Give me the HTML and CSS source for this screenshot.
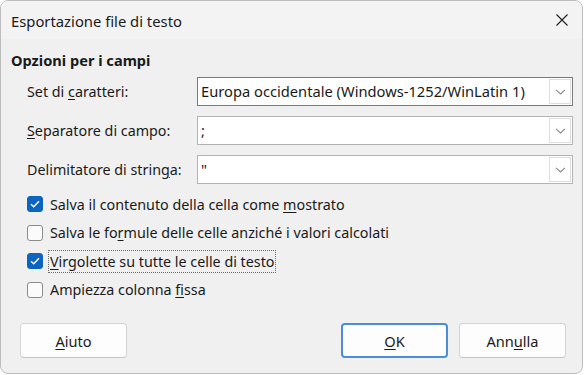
FILE: index.html
```html
<!DOCTYPE html>
<html lang="it">
<head>
    <meta charset="UTF-8">
    <title>Esportazione file di testo</title>
    <link rel="stylesheet" href="styles.css">
</head>
<body>
    <div class="dialog">
        <div class="titlebar">
            <span class="title">Esportazione file di testo</span>
            <svg class="close" width="14" height="14" viewBox="0 0 14 14">
                <path d="M1.5 1.5 L12.5 12.5 M12.5 1.5 L1.5 12.5" stroke="#1f1f1f" stroke-width="1.1" fill="none"/>
            </svg>
        </div>

        <div class="content">
            <div class="section-title">Opzioni per i campi</div>

            <div class="fields">
                <label class="field-label">Set di <u>c</u>aratteri:</label>
                <div class="combo active">
                    <span class="combo-text">Europa occidentale (Windows-1252/WinLatin 1)</span>
                    <span class="combo-btn"><svg width="11" height="6" viewBox="0 0 11 6"><path d="M1 0.8 L5.5 5 L10 0.8" stroke="#8a8a8a" stroke-width="1.1" fill="none"/></svg></span>
                </div>

                <label class="field-label"><u>S</u>eparatore di campo:</label>
                <div class="combo">
                    <span class="combo-text">;</span>
                    <span class="combo-btn"><svg width="11" height="6" viewBox="0 0 11 6"><path d="M1 0.8 L5.5 5 L10 0.8" stroke="#8a8a8a" stroke-width="1.1" fill="none"/></svg></span>
                </div>

                <label class="field-label">Delimitatore di strin<u>g</u>a:</label>
                <div class="combo">
                    <span class="combo-text">"</span>
                    <span class="combo-btn"><svg width="11" height="6" viewBox="0 0 11 6"><path d="M1 0.8 L5.5 5 L10 0.8" stroke="#8a8a8a" stroke-width="1.1" fill="none"/></svg></span>
                </div>
            </div>

            <div class="checks">
                <div class="check-row">
                    <span class="box checked"><svg width="10" height="8" viewBox="0 0 10 8"><path d="M1 4.2 L3.7 6.8 L9 1.2" stroke="#fff" stroke-width="1.4" fill="none"/></svg></span>
                    <span class="check-label">Salva il contenuto della cella come <u>m</u>ostrato</span>
                </div>
                <div class="check-row">
                    <span class="box"></span>
                    <span class="check-label">Salva le fo<u>r</u>mule delle celle anziché i valori calcolati</span>
                </div>
                <div class="check-row">
                    <span class="box checked"><svg width="10" height="8" viewBox="0 0 10 8"><path d="M1 4.2 L3.7 6.8 L9 1.2" stroke="#fff" stroke-width="1.4" fill="none"/></svg></span>
                    <span class="check-label focus"><u>V</u>irgolette su tutte le celle di testo</span>
                </div>
                <div class="check-row">
                    <span class="box"></span>
                    <span class="check-label">Ampiezza colonna <u>f</u>issa</span>
                </div>
            </div>

            <div class="buttons">
                <button class="btn"><u>A</u>iuto</button>
                <div class="spacer"></div>
                <button class="btn default"><u>O</u>K</button>
                <button class="btn">Ann<u>u</u>lla</button>
            </div>
        </div>
    </div>
</body>
</html>
```

FILE: styles.css
```css
body {
    margin: 0;
    background-color: #ffffff;
    font-family: "Noto Sans", "Open Sans", sans-serif;
    font-size: 14.3px;
    color: #1a1a1a;
}
.dialog {
    width: 583px;
    height: 374px;
    border: 1px solid #bdbdbd;
    border-radius: 8px;
    box-sizing: border-box;
    overflow: hidden;
    background-color: #f0f0f0;
    display: flex;
    flex-direction: column;
}
.titlebar {
    height: 38px;
    flex: none;
    background-color: #f3f3f4;
    display: flex;
    align-items: center;
    padding: 0 13px 0 10px;
}
.title {
    flex: 1;
    font-size: 14.8px;
    margin-top: 1px;
}
.content {
    flex: 1;
    display: flex;
    flex-direction: column;
    padding: 11px 9px 0 10px;
}
.section-title {
    font-weight: bold;
    font-size: 14.6px;
    line-height: 20px;
}
u {
    text-decoration-thickness: 1px;
    text-underline-offset: 2px;
}

/* combo rows */
.fields {
    display: grid;
    grid-template-columns: 170px 376px;
    row-gap: 10px;
    align-items: center;
    margin-top: 7px;
    padding-left: 16px;
}
.combo {
    height: 29px;
    box-sizing: border-box;
    border: 1px solid #b4b4b4;
    background-color: #ffffff;
    display: flex;
    align-items: stretch;
}
.combo.active {
    border-color: #7a7a7a;
}
.combo-text {
    flex: 1;
    padding-left: 3px;
    line-height: 27px;
    font-size: 14.7px;
    white-space: nowrap;
    overflow: hidden;
}
.combo-btn {
    width: 20px;
    margin: 1px;
    border: 1px solid #dedede;
    display: flex;
    align-items: center;
    justify-content: center;
}

/* checkboxes */
.checks {
    display: flex;
    flex-direction: column;
    gap: 8.5px;
    margin-top: 10px;
    padding-left: 16px;
}
.check-row {
    display: flex;
    align-items: center;
    height: 20px;
}
.box {
    width: 16px;
    height: 16px;
    box-sizing: border-box;
    border: 1px solid #8b8b8b;
    border-radius: 3px;
    background-color: #fbfbfb;
    display: flex;
    align-items: center;
    justify-content: center;
    margin-right: 5px;
}
.box.checked {
    background-color: #0a64c0;
    border-color: #0a64c0;
}
.check-label {
    line-height: 19px;
    padding: 1px 1px;
    border: 1px dotted transparent;
    white-space: nowrap;
}
.check-label.focus {
    border-color: #6b6b6b;
}

/* buttons */
.buttons {
    display: flex;
    gap: 11px;
    margin-top: 23.5px;
    padding-left: 9px;
}
.spacer {
    flex: 1;
}
.btn {
    width: 107px;
    height: 35px;
    font-family: inherit;
    font-size: 14.6px;
    color: #1a1a1a;
    background-color: #fdfdfd;
    border: 1px solid #d3d3d3;
    border-bottom-color: #c4c4c4;
    border-radius: 4px;
}
.btn.default {
    border: 2px solid #4a8fd6;
}
.btn:last-child {
    margin-right: 7px;
}
```
